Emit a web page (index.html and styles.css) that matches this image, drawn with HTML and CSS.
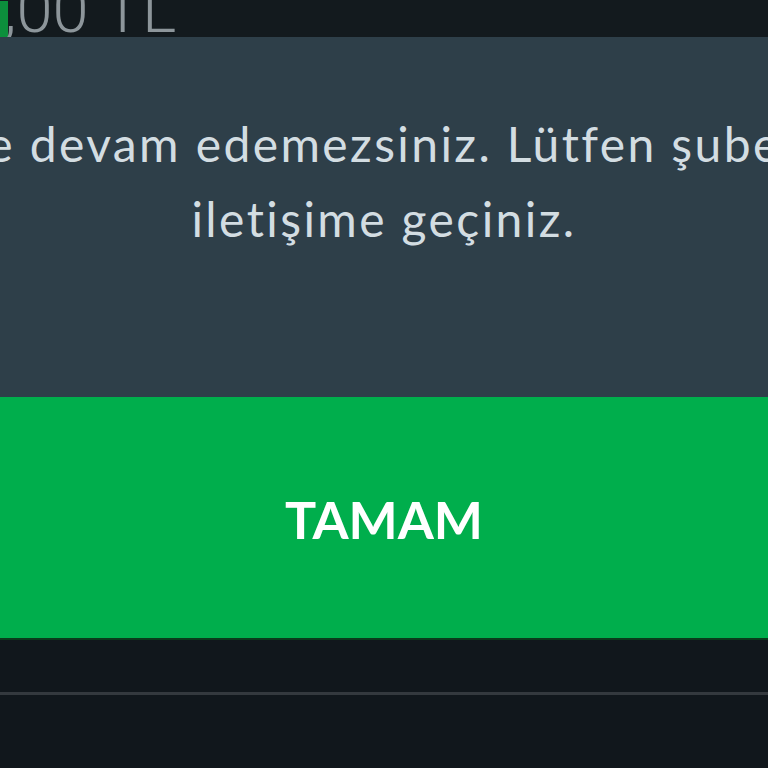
FILE: index.html
```html
<!DOCTYPE html>
<html lang="tr">
<head>
<meta charset="utf-8">
<link rel="stylesheet" href="styles.css">
</head>
<body>
<div class="top">
  <div class="amount"><span class="mark"></span><span class="num">,00 TL</span></div>
</div>
<div class="dialog">
  <p class="message"><span class="line">e devam edemezsiniz. Lütfen şube</span><span class="line">iletişime geçiniz.</span></p>
</div>
<div class="btn">TAMAM</div>
<div class="bottom">
  <div class="rule"></div>
</div>
</body>
</html>
```
FILE: styles.css
```css
html, body {
  margin: 0;
  padding: 0;
  width: 768px;
  height: 768px;
  overflow: hidden;
  background: #11171b;
}
.top {
  height: 37px;
  background: #131a1e;
  overflow: hidden;
}
.amount {
  display: flex;
  align-items: flex-end;
  height: 37px;
}
.mark {
  width: 8px;
  height: 36px;
  background: #0c8f3c;
  flex: none;
}
.num {
  font-family: Roboto, "Liberation Sans", sans-serif;
  font-weight: 300;
  font-size: 65px;
  line-height: 1;
  color: #8d969b;
  margin-bottom: -6px;
  margin-left: -4px;
  white-space: nowrap;
}
.dialog {
  height: 360px;
  background: #2e3f49;
  box-sizing: border-box;
  padding-top: 69px;
  overflow: hidden;
}
.message {
  margin: 0 -60px;
  font-family: Lato, "Noto Sans", sans-serif;
  font-size: 48px;
  letter-spacing: 2.4px;
  line-height: 75px;
  color: #d3dde2;
  text-align: center;
  white-space: nowrap;
}
.line {
  display: block;
}
.btn {
  height: 241px;
  background: #00ae4c;
  color: #ffffff;
  font-family: Lato, "Noto Sans", sans-serif;
  font-weight: 700;
  font-size: 52px;
  display: flex;
  align-items: center;
  justify-content: center;
  padding-top: 2px;
  box-sizing: border-box;
}
.bottom {
  height: 130px;
  border-top: 2px solid #0a3a1c;
  background: #11171c;
  box-sizing: border-box;
  padding-top: 52px;
}
.rule {
  height: 3px;
  background: #34393e;
}
```
